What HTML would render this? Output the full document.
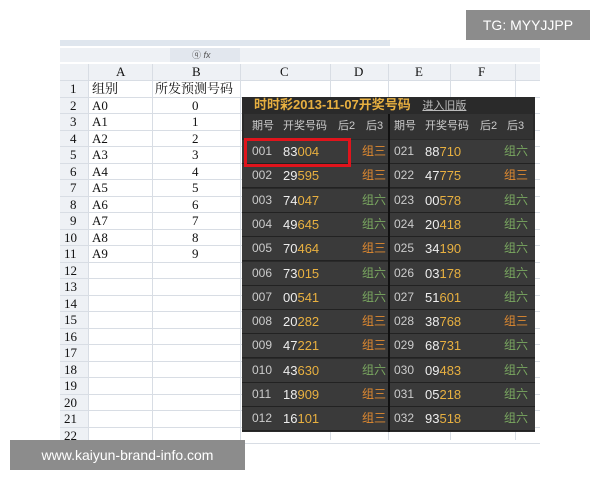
<!DOCTYPE html>
<html><head><meta charset="utf-8"><style>
body{margin:0;width:600px;height:480px;background:#fff;position:relative;overflow:hidden;font-family:"Liberation Sans","Noto Sans CJK SC",sans-serif}
.a{position:absolute}
.sheet{left:60px;top:40px;width:480px;height:400px;background:#fff}
.hl{position:absolute;height:1px;background:#d8dde4}
.vl{position:absolute;width:1px;background:#d8dde4}
.t{position:absolute;font-family:"Liberation Serif","Noto Serif CJK SC",serif;font-size:13px;color:#111;line-height:16px}
.panel{left:242px;top:97px;width:293px;height:335px;background:#2a2a2a}
.row{position:absolute;left:0;width:293px;height:23px;background:#3a3a3a;border-bottom:1px solid #222}
.c{position:absolute;font-size:12px;line-height:23px;color:#ccc}
.n{position:absolute;font-size:13px;line-height:23px;color:#eee}
.n b{font-weight:normal;color:#e8b040}
.g3{color:#e08a30}.g6{color:#7aa860}
</style></head><body>
<div class="a sheet">
<div class="a" style="left:0;top:0;width:330px;height:6px;background:#dfe6ee"></div>
<div class="a" style="left:0;top:8px;width:480px;height:14px;background:#eef1f5"></div>
<div class="a" style="left:110px;top:8px;width:70px;height:14px;background:#e2e7ee;font-size:9px;color:#555;line-height:14px;text-indent:22px">ⓠ <i>fx</i></div>
<div class="a" style="left:0;top:24px;width:480px;height:16px;background:#eef1f5;border-bottom:1px solid #b9c3cf"></div>
<div class="a" style="left:0;top:24px;width:28px;height:376px;background:#eef1f5;border-right:1px solid #b9c3cf"></div>
</div>
<div id="grid"></div>
<div class="t" style="left:116px;top:64px">A</div><div class="t" style="left:192px;top:64px">B</div><div class="t" style="left:280px;top:64px">C</div><div class="t" style="left:354px;top:64px">D</div><div class="t" style="left:415px;top:64px">E</div><div class="t" style="left:478px;top:64px">F</div>
<div class="t" style="left:92px;top:81px">组别</div><div class="t" style="left:155px;top:81px">所发预测号码</div>
<div class="a panel">
<div class="a" style="left:12px;top:0;font-size:13px;font-weight:bold;color:#e8b040;line-height:16px">时时彩2013-11-07开奖号码 <span style="font-weight:normal;color:#bbb;font-size:11px;text-decoration:underline;margin-left:8px">进入旧版</span></div>
<div class="a" style="left:2px;top:17px;width:289px;height:25px;background:#333"></div>
<div class="c" style="left:10px;top:18px;font-size:11px">期号</div><div class="c" style="left:41px;top:18px;font-size:11px">开奖号码</div><div class="c" style="left:96px;top:18px;font-size:11px">后2</div><div class="c" style="left:124px;top:18px;font-size:11px">后3</div>
<div class="c" style="left:152px;top:18px;font-size:11px">期号</div><div class="c" style="left:183px;top:18px;font-size:11px">开奖号码</div><div class="c" style="left:238px;top:18px;font-size:11px">后2</div><div class="c" style="left:265px;top:18px;font-size:11px">后3</div>
<div id="rows"></div>
<div class="a" style="left:146px;top:17px;width:2px;height:318px;background:#111"></div>
</div>
<div class="a" style="left:244px;top:138px;width:101px;height:23px;border:3px solid #e0141c"></div>
<div class="a" style="left:466px;top:10px;width:124px;height:30px;background:#8c8c8c;color:#fff;font-size:14px;line-height:30px;text-align:center">TG: MYYJJPP</div>
<div class="a" style="left:10px;top:440px;width:235px;height:30px;background:#8c8c8c;color:#fff;font-size:14px;line-height:30px;text-align:center">www.kaiyun-brand-info.com</div>
<script>
var g='';var cols=[88,152,240,330,388,450,515];
for(var i=0;i<23;i++){var y=80+i*16.5;g+='<div class="hl" style="left:60px;top:'+y+'px;width:480px"></div>';if(i<22)g+='<div class="t" style="left:'+(i<9?70:64)+'px;top:'+(y+1)+'px">'+(i+1)+'</div>';}
cols.forEach(function(x){g+='<div class="vl" style="left:'+x+'px;top:64px;height:376px"></div>'});
var L=[["A0",0],["A1",1],["A2",2],["A3",3],["A4",4],["A5",5],["A6",6],["A7",7],["A8",8],["A9",9]];
L.forEach(function(r,i){var y=97.5+i*16.5;g+='<div class="t" style="left:92px;top:'+y+'px">'+r[0]+'</div><div class="t" style="left:192px;top:'+y+'px">'+r[1]+'</div>'});
document.getElementById('grid').innerHTML=g;
var d=[["83004",3,"88710",6],["29595",3,"47775",3],["74047",6,"00578",6],["49645",6,"20418",6],["70464",3,"34190",6],["73015",6,"03178",6],["00541",6,"51601",6],["20282",3,"38768",3],["47221",3,"68731",6],["43630",6,"09483",6],["18909",3,"05218",6],["16101",3,"93518",6]];
var h='';function num(s){return s.slice(0,2)+'<b>'+s.slice(2)+'</b>'}
d.forEach(function(r,i){var y=43+i*24.3;var p1=('00'+(i+1)).slice(-3),p2='0'+(i+21);
h+='<div class="row" style="top:'+y+'px"></div><div class="c" style="left:10px;top:'+y+'px">'+p1+'</div><div class="n" style="left:41px;top:'+y+'px">'+num(r[0])+'</div><div class="c g'+r[1]+'" style="left:120px;top:'+y+'px">组'+(r[1]==3?'三':'六')+'</div>'+
'<div class="c" style="left:152px;top:'+y+'px">'+p2+'</div><div class="n" style="left:183px;top:'+y+'px">'+num(r[2])+'</div><div class="c g'+r[3]+'" style="left:262px;top:'+y+'px">组'+(r[3]==3?'三':'六')+'</div>';});
document.getElementById('rows').innerHTML=h;
</script>
</body></html>
